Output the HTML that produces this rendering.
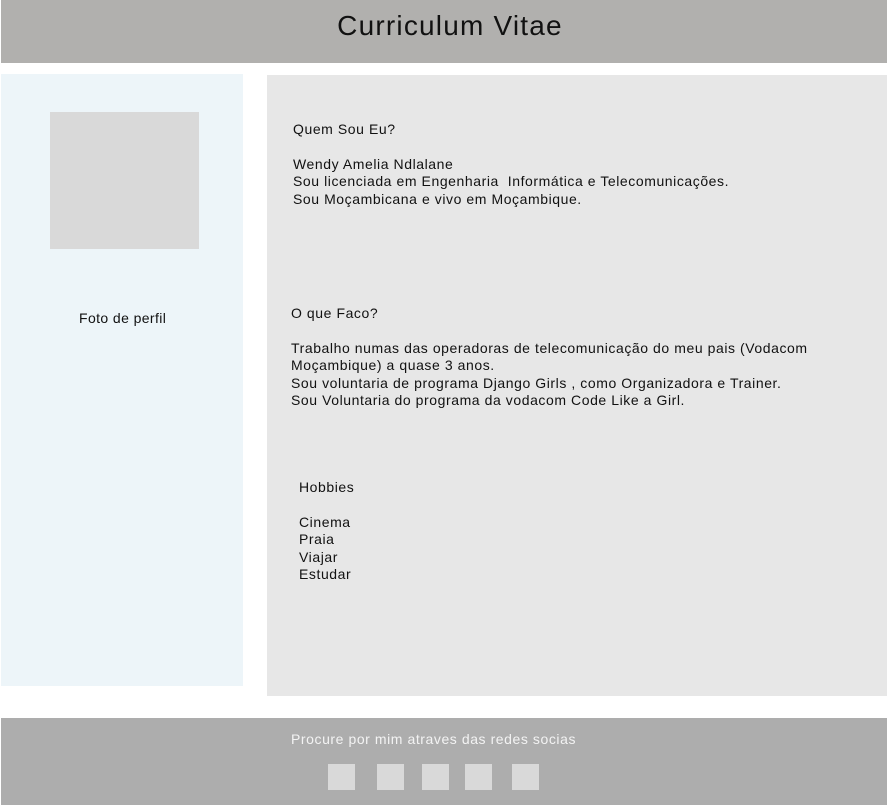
<!DOCTYPE html>
<html><head><meta charset="utf-8"><style>
body{margin:0;width:887px;height:805px;background:#fff;position:relative;overflow:hidden;font-family:"Liberation Sans",sans-serif;color:#111}
div{position:absolute}
.t{font-size:14px;line-height:17.4px;white-space:pre;letter-spacing:0.57px}
.sq{background:#d9d9d9;width:27px;height:26px;top:764px}
</style></head><body>
<div style="left:1px;top:0;width:886px;height:63px;background:#b1b0ae"></div>
<div style="left:0;width:900px;top:10px;text-align:center;font-size:28px;letter-spacing:1.2px">Curriculum Vitae</div>
<div style="left:1px;top:74px;width:242px;height:612px;background:#edf5f9"></div>
<div style="left:50px;top:112px;width:149px;height:137px;background:#d9d9d9"></div>
<div class="t" style="left:79px;top:310px;letter-spacing:0.4px">Foto de perfil</div>
<div style="left:267px;top:75px;width:620px;height:621px;background:#e7e7e7"></div>
<div class="t" style="left:293px;top:121px">Quem Sou Eu?

Wendy Amelia Ndlalane
Sou licenciada em Engenharia  Informática e Telecomunicações.
Sou Moçambicana e vivo em Moçambique.</div>
<div class="t" style="left:291px;top:305px">O que Faco?

Trabalho numas das operadoras de telecomunicação do meu pais (Vodacom
Moçambique) a quase 3 anos.
Sou voluntaria de programa Django Girls , como Organizadora e Trainer.
Sou Voluntaria do programa da vodacom Code Like a Girl.</div>
<div class="t" style="left:299px;top:479px">Hobbies

Cinema
Praia
Viajar
Estudar</div>
<div style="left:1px;top:718px;width:886px;height:87px;background:#adadad"></div>
<div class="t" style="left:291px;top:731px;color:#f3f3f3">Procure por mim atraves das redes socias</div>
<div class="sq" style="left:328px"></div>
<div class="sq" style="left:377px"></div>
<div class="sq" style="left:422px"></div>
<div class="sq" style="left:465px"></div>
<div class="sq" style="left:512px"></div>
</body></html>
